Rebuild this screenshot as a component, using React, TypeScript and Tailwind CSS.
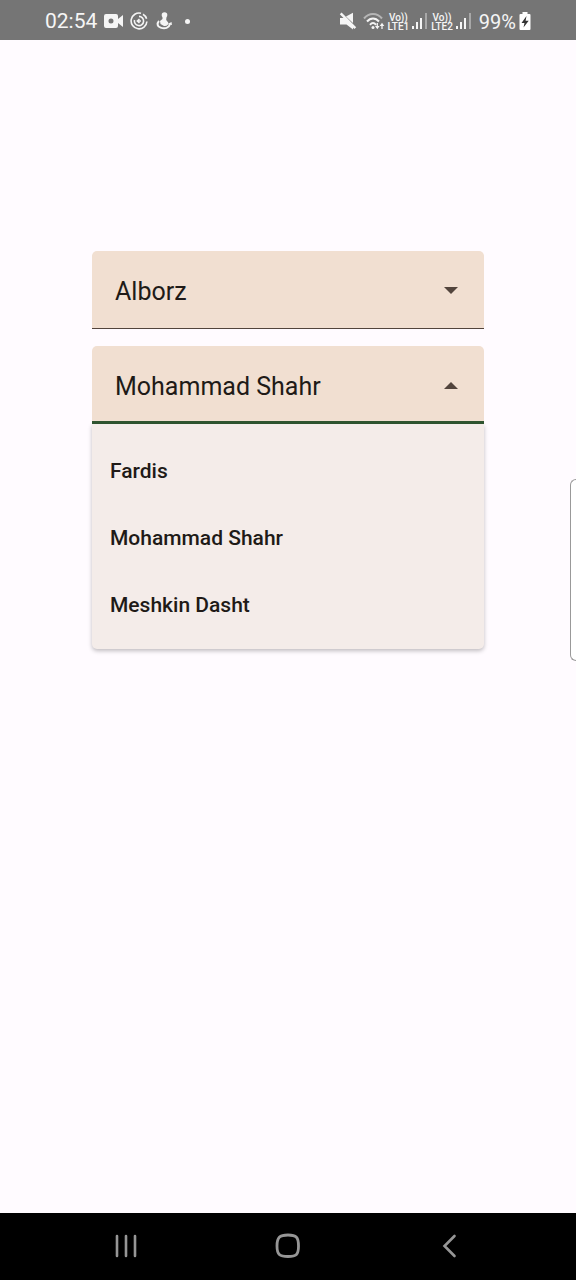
import { useState } from "react";

type DropdownProps = {
  label: string;
  options: string[];
  value: string;
  onChange: (value: string) => void;
  open: boolean;
  onToggle: () => void;
};

function Dropdown({ label, options, value, onChange, open, onToggle }: DropdownProps) {
  return (
    <div className="relative">
      <select
        aria-label={label}
        value={value}
        onChange={(e) => onChange(e.target.value)}
        onMouseDown={(e) => {
          e.preventDefault();
          onToggle();
        }}
        className={
          "block h-[78px] w-full appearance-none rounded-t-[5px] bg-[#f1dfd1] px-[23px] text-[25px] text-[#201a17] outline-none " +
          (open ? "border-b-[3px] border-[#2f5530] pt-[6px]" : "border-b border-[#52443c] pt-[5px] pb-px")
        }
      >
        {options.map((o) => (
          <option key={o}>{o}</option>
        ))}
      </select>
      <svg
        viewBox="0 0 14 7"
        className="pointer-events-none absolute top-9 right-[26px] h-[7px] w-[14px] fill-[#52443c]"
        aria-hidden="true"
      >
        {open ? <path d="M0 7 7 0l7 7z" /> : <path d="M0 0h14L7 7z" />}
      </svg>
      {open && (
        <ul
          role="listbox"
          aria-label={label}
          className="absolute inset-x-0 top-full rounded-b-[5px] bg-[#f4ece9] pt-[14px] pb-[10px] shadow-[0_2px_4px_rgba(0,0,0,0.25)]"
        >
          {options.map((o) => (
            <li key={o} role="option" aria-selected={o === value}>
              <button
                type="button"
                onClick={() => {
                  onChange(o);
                  onToggle();
                }}
                className="flex h-[67px] w-full items-center px-[18px] text-[21px] font-medium text-[#201a17]"
              >
                {o}
              </button>
            </li>
          ))}
        </ul>
      )}
    </div>
  );
}

function VoLte({ sim }: { sim: string }) {
  return (
    <span className="flex flex-col items-center pt-[2px] text-[10px] leading-[9px] font-medium">
      <span>Vo))</span>
      <span>LTE{sim}</span>
    </span>
  );
}

function Signal() {
  return (
    <svg viewBox="0 0 16 16" className="h-4 w-4 fill-current" aria-hidden="true">
      <path d="M0 13h2v3H0zM4 9h2v7H4zM8 5h2v11H8z" />
      <path d="M13 0h2v16h-2z" opacity=".4" />
    </svg>
  );
}

function StatusBar() {
  return (
    <header className="flex h-10 items-center justify-between bg-[#757575] pt-[2px] pr-[45px] pl-[45px] text-[#f5f5f5]">
      <div className="flex items-center gap-[7px]">
        <span className="pt-[2px] text-[21px]">02:54</span>
        <svg viewBox="0 0 20 16" className="h-4 w-5" fill="currentColor" aria-hidden="true">
          <path
            fillRule="evenodd"
            d="M2 1h10a2 2 0 0 1 2 2v3l5-4v12l-5-4v3a2 2 0 0 1-2 2H2a2 2 0 0 1-2-2V3a2 2 0 0 1 2-2zm5 4.500a2.500 2.500 0 1 0 0 5 2.500 2.500 0 0 0 0-5z"
          />
        </svg>
        <svg
          viewBox="0 0 18 18"
          className="-ml-px h-[18px] w-[18px]"
          fill="none"
          stroke="currentColor"
          strokeWidth="1.600"
          aria-hidden="true"
        >
          <path d="M11 1.300A7.900 7.900 0 1 0 16.900 9.500" />
          <path d="M13 2.200a8 8 0 0 1 3.600 4.500" />
          <path d="M4.500 8a4.600 4.600 0 1 0 4.500-3.600" />
          <path d="M9.500 7 7.300 9l2.200 2M7.500 9H11" strokeWidth="1.500" />
        </svg>
        <svg viewBox="0 0 16 18" className="ml-px h-[18px] w-4" fill="currentColor" aria-hidden="true">
          <circle cx="8.500" cy="3" r="2.800" />
          <path d="M6.500 4.500h4l-.3 3.500 2 2.500c.5 2.500-1.500 4-4.200 3.500L4.500 12l-.5-3 2.500-2z" />
          <path
            d="M3 9C.6 11.500 1.500 15 4.500 15.600 9 17 13 16 14 12"
            fill="none"
            stroke="currentColor"
            strokeWidth="2"
          />
          <path d="M11.500 12 15.500 10 16 13z" />
        </svg>
        <span className="ml-[6px] h-[5px] w-[5px] rounded-full bg-[#f5f5f5]" />
      </div>
      <div className="flex items-center gap-[3px]">
        <svg viewBox="0 0 18 18" className="mr-[3px] h-[18px] w-[18px]" fill="currentColor" aria-hidden="true">
          <path d="M1 6h4.500l8.500 8.500v3L7.500 12.500H1zM7 4.500 14 .8V11zM.8 2.200 2.600.5l14.600 14.700-1.800 1.700z" />
        </svg>
        <svg
          viewBox="0 0 22 18"
          className="h-[18px] w-[22px]"
          fill="none"
          stroke="currentColor"
          strokeWidth="2"
          aria-hidden="true"
        >
          <path d="M1 6.500C6 .5 14 .5 19 6.500" opacity=".5" />
          <path d="M4 9.500c3.500-4 8.500-4 12 0M7 12.800c2-2.300 4-2.300 6 0" />
          <circle cx="10" cy="15.500" r="1.500" fill="currentColor" stroke="none" />
          <path d="M14.300 11v5M19 17v-5" strokeWidth="1.300" />
          <path d="M12 14h4.600l-2.300 3.200zM16.700 14h4.600L19 10.800z" fill="currentColor" stroke="none" />
        </svg>
        <VoLte sim="1" />
        <Signal />
        <VoLte sim="2" />
        <Signal />
        <span className="ml-1 pt-[2px] text-[20px]">99%</span>
        <svg viewBox="0 0 12 18" className="h-[18px] w-3" aria-hidden="true">
          <path d="M3.500 0h5v2H10.500a1 1 0 0 1 1 1v14a1 1 0 0 1-1 1h-9a1 1 0 0 1-1-1V3a1 1 0 0 1 1-1h2z" fill="#fff" />
          <path d="M7.500 4 2.500 11h3L4.500 15.500 9.700 8.800H6.600z" fill="#333" />
        </svg>
      </div>
    </header>
  );
}

function NavBar() {
  return (
    <nav className="flex h-[67px] items-center bg-black px-[45px] pb-[2px] text-[#969696]">
      <button type="button" aria-label="Recent apps" className="flex flex-1 justify-center">
        <svg viewBox="0 0 24 24" className="h-6 w-6" stroke="currentColor" strokeWidth="2.600" strokeLinecap="round">
          <path d="M3 2v20M12 2v20M21 2v20" />
        </svg>
      </button>
      <button type="button" aria-label="Home" className="flex flex-1 justify-center">
        <svg viewBox="0 0 26 26" className="h-[26px] w-[26px]" fill="none" stroke="currentColor" strokeWidth="2.800">
          <path d="M13 2c8.500 0 10.500 2.500 10.500 11s-2 10.500-10.500 10.500S2 21.500 2 13 4.500 2 13 2z" />
        </svg>
      </button>
      <button type="button" aria-label="Back" className="flex flex-1 justify-center">
        <svg
          viewBox="0 0 16 24"
          className="h-6 w-4"
          fill="none"
          stroke="currentColor"
          strokeWidth="2.600"
          strokeLinecap="round"
        >
          <path d="M12.500 2 2.500 12l10 10" />
        </svg>
      </button>
    </nav>
  );
}

export default function App() {
  const [province, setProvince] = useState("Alborz");
  const [city, setCity] = useState("Mohammad Shahr");
  const [openField, setOpenField] = useState<string | null>("city");
  const toggle = (name: string) => setOpenField((current) => (current === name ? null : name));

  return (
    <div className="relative flex min-h-screen flex-col bg-[#fffbff] font-[Roboto,sans-serif]">
      <StatusBar />
      <main className="flex flex-1 flex-col gap-[17px] px-[92px] pt-[211px]">
        <Dropdown
          label="Province"
          options={["Alborz"]}
          value={province}
          onChange={setProvince}
          open={openField === "province"}
          onToggle={() => toggle("province")}
        />
        <Dropdown
          label="City"
          options={["Fardis", "Mohammad Shahr", "Meshkin Dasht"]}
          value={city}
          onChange={setCity}
          open={openField === "city"}
          onToggle={() => toggle("city")}
        />
      </main>
      <NavBar />
      <div className="absolute top-[479px] right-0 h-[182px] w-[6px] rounded-l-[6px] border border-r-0 border-[#999] bg-white" />
    </div>
  );
}
